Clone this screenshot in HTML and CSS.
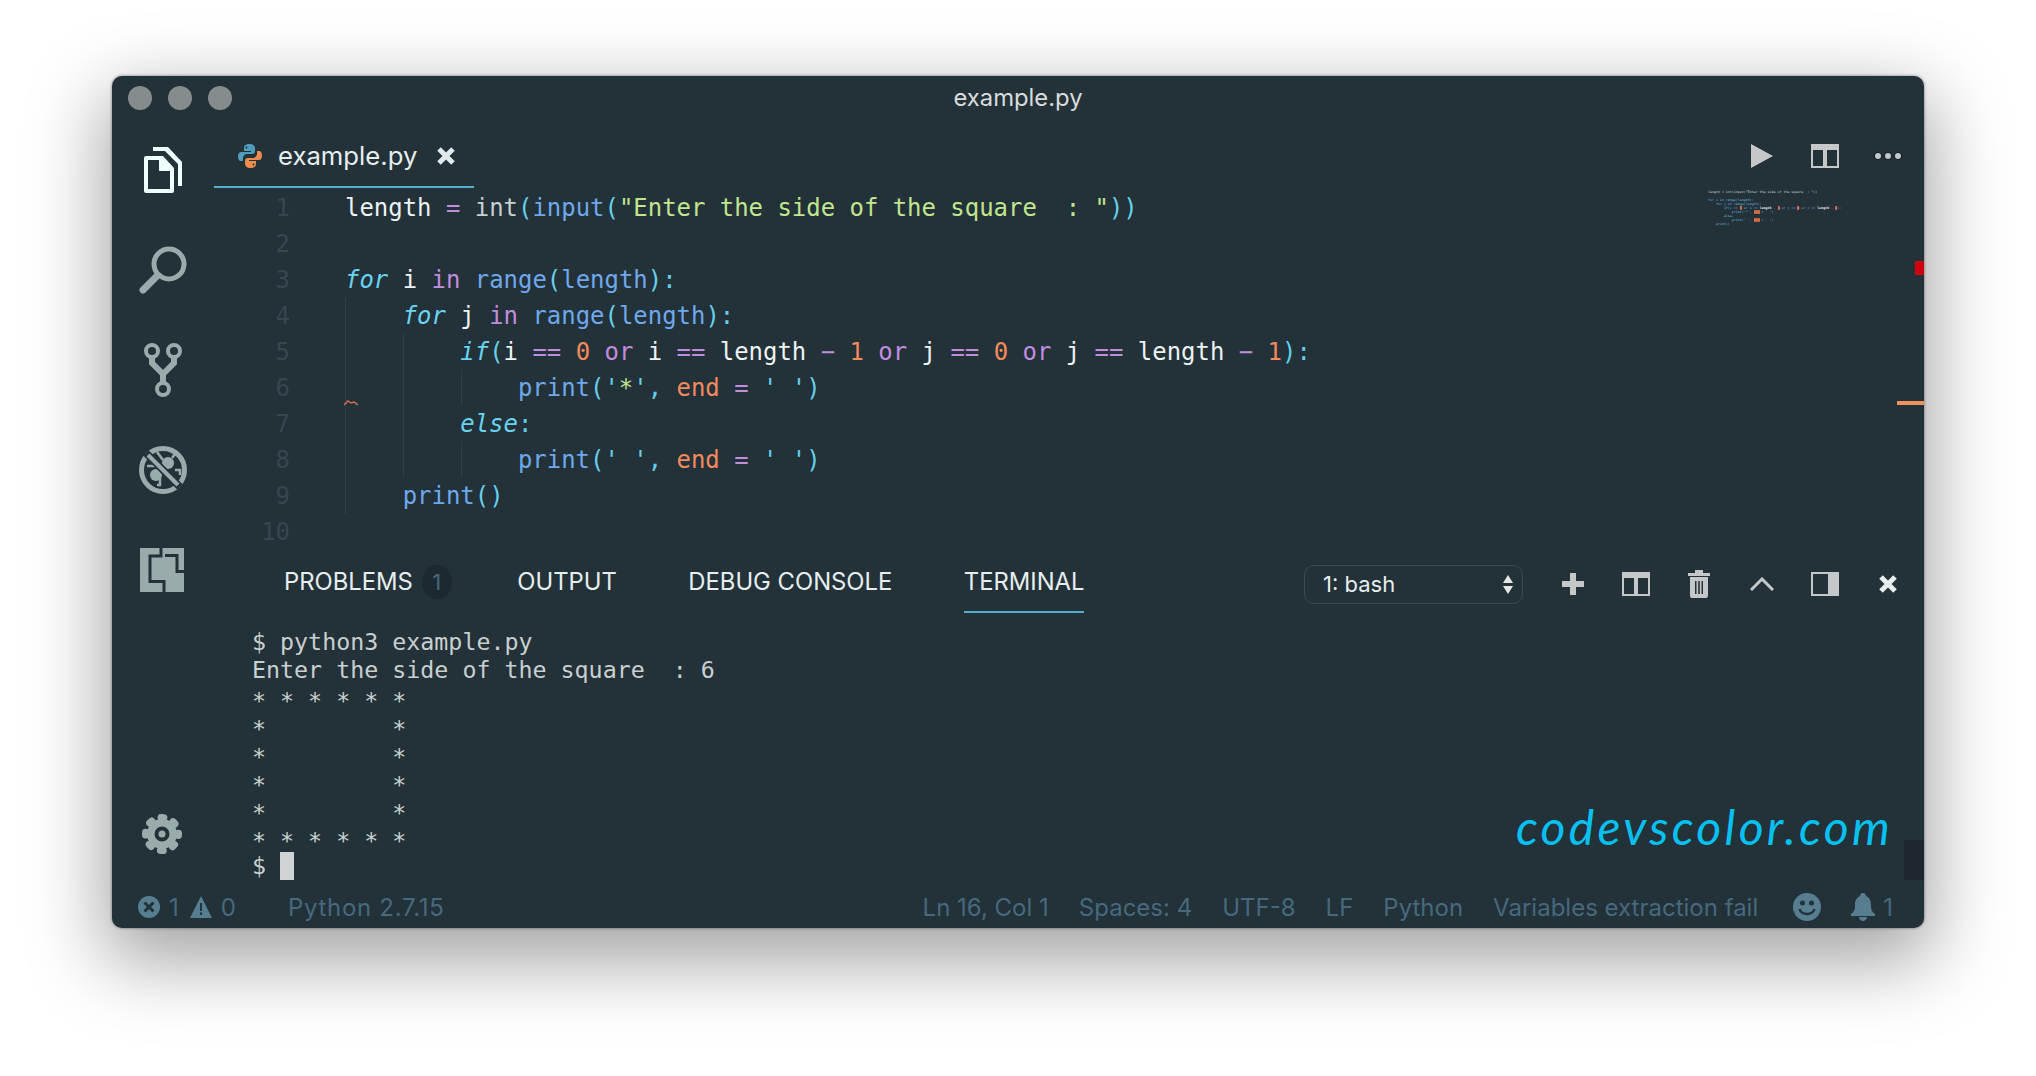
FILE: index.html
```html
<!DOCTYPE html>
<html lang="en">
<head>
<meta charset="utf-8">
<title>example.py</title>
<link rel="stylesheet" href="styles.css">
</head>
<body>
<div class="window">
  <header class="titlebar">
    <div class="lights"><i></i><i></i><i></i></div>
    <div class="title">example.py</div>
  </header>
  <div class="main">
    <nav class="activity">
      <div class="slot">
        <svg width="38" height="46" viewBox="0 0 38 46"><path class="white" d="M9 0h15l14 15v24h-4V17L21 4H9z"/><path class="white" fill-rule="evenodd" d="M2 9h17l11 12v23a2 2 0 0 1-2 2H2a2 2 0 0 1-2-2V11a2 2 0 0 1 2-2zm2 4v29h22V24H15V13z"/></svg>
      </div>
      <div class="slot">
        <svg width="48" height="48" viewBox="0 0 48 48"><circle class="line" cx="30" cy="18" r="15" stroke-width="5"/><path class="line" stroke-width="7" stroke-linecap="round" d="M18 30 4 44"/></svg>
      </div>
      <div class="slot">
        <svg width="38" height="54" viewBox="0 0 38 54"><g class="line"><circle cx="8" cy="8" r="6" stroke-width="4"/><circle cx="30" cy="8" r="6" stroke-width="4"/><circle cx="19" cy="46" r="6" stroke-width="4"/><path stroke-width="6" d="M8 14v6l11 11 11-11v-6M19 31v10"/></g></svg>
      </div>
      <div class="slot">
        <svg width="48" height="48" viewBox="0 0 48 48"><circle class="line" cx="24" cy="24" r="21.500" stroke-width="5"/><circle class="fill" cx="17" cy="29" r="6"/><circle class="fill" cx="29" cy="17" r="6"/><path class="line" stroke-width="2.500" d="M18 6l6 8M33 12l3-4 3 0M36 24h5v5M8 20h8M21 32v7h-3"/><path class="gap" stroke-width="7.500" d="M7 7l34 34"/><path class="line" stroke-width="4" d="M9 9l30 30"/></svg>
      </div>
      <div class="slot slot-ext">
        <svg width="44" height="44" viewBox="0 0 44 44"><rect class="fill" width="44" height="44"/><path class="gap" stroke-width="3" fill="none" d="M21 0v8H10v25.500h14V44M25 7.500h12v16H44M32 24H24"/><rect class="fill" x="12" y="12" width="20" height="20"/></svg>
      </div>
      <div class="slot slot-bottom">
        <svg width="40" height="40" viewBox="0 0 40 40"><circle class="fill" cx="20" cy="20" r="15"/><circle class="line" cx="20" cy="20" r="16.500" stroke-width="7" stroke-linecap="round" stroke-dasharray="3 9.960" stroke-dashoffset="1.500"/><circle class="gap" cx="20" cy="20" r="5.500" fill="none" stroke-width="4"/></svg>
      </div>
    </nav>
    <div class="content">
      <div class="tabbar">
        <div class="tab">
          <svg width="24" height="24" viewBox="0 0 24 24"><path fill="#4f9dba" d="M12 0c-5 0-6 2-6 4v3h7v1H3c-2 0-3 2-3 4.500S1 17 3 17h2v-3c0-2 2-4 4-4h5c2 0 3-1 3-3V4c0-2-2-4-5-4z"/><path fill="#ee8c4f" d="M12 24c5 0 6-2 6-4v-3h-7v-1h10c2 0 3-2 3-4.500S23 7 21 7h-2v3c0 2-2 4-4 4h-5c-2 0-3 1-3 3v3c0 2 2 4 5 4z"/><circle fill="#233139" cx="8.500" cy="3.500" r="1"/><circle fill="#233139" cx="15.500" cy="20.500" r="1"/></svg>
          <span class="tab-name">example.py</span>
          <svg class="tab-close" width="18" height="18" viewBox="0 0 18 18"><path d="M2 2l14 14M16 2 2 16" stroke="#dfeaea" stroke-width="5"/></svg>
        </div>
        <div class="editor-actions">
          <svg class="act-play" width="22" height="24" viewBox="0 0 22 24"><path fill="#c5c7c9" d="M0 0l22 12L0 24z"/></svg>
          <svg class="act-split" width="28" height="24" viewBox="0 0 28 24"><path fill="#c5c7c9" fill-rule="evenodd" d="M0 0h28v24H0zM2 6v16h10V6zM16 6v16h10V6z"/></svg>
          <div class="dots"><i></i><i></i><i></i></div>
        </div>
      </div>
      <div class="editor">
        <div class="gutter">
          <div>1</div><div>2</div><div>3</div><div>4</div><div>5</div><div>6</div><div>7</div><div>8</div><div>9</div><div>10</div>
        </div>
        <div class="code">
          <div>length <b class="op">=</b> <b class="dim">int</b><b class="pn">(</b><b class="fn">input</b><b class="pn">(</b><b class="st">"Enter the side of the square  : "</b><b class="pn">))</b></div>
          <div>&nbsp;</div>
          <div><em class="kw">for</em> i <b class="op">in</b> <b class="fn">range</b><b class="pn">(</b><b class="fn">length</b><b class="pn">):</b></div>
          <div>    <em class="kw">for</em> j <b class="op">in</b> <b class="fn">range</b><b class="pn">(</b><b class="fn">length</b><b class="pn">):</b></div>
          <div>        <em class="kw">if</em><b class="pn">(</b>i <b class="op">==</b> <b class="nu">0</b> <b class="op">or</b> i <b class="op">==</b> length <b class="op">−</b> <b class="nu">1</b> <b class="op">or</b> j <b class="op">==</b> <b class="nu">0</b> <b class="op">or</b> j <b class="op">==</b> length <b class="op">−</b> <b class="nu">1</b><b class="pn">):</b></div>
          <div>            <b class="fn">print</b><b class="pn">(</b><b class="pn">'</b><b class="st">*</b><b class="pn">',</b> <b class="nu">end</b> <b class="op">=</b> <b class="pn">' ')</b></div>
          <div>        <em class="kw">else</em><b class="pn">:</b></div>
          <div>            <b class="fn">print</b><b class="pn">(' ',</b> <b class="nu">end</b> <b class="op">=</b> <b class="pn">' ')</b></div>
          <div>    <b class="fn">print</b><b class="pn">()</b></div>
          <div>&nbsp;</div>
        </div>
        <i class="guide g1"></i><i class="guide g2"></i><i class="guide g3"></i><i class="guide g4"></i>
        <svg class="squiggle" width="14" height="6" viewBox="0 0 14 6"><path d="M0 5 4 1l3 2 3-1 4 3" fill="none" stroke="#d0704f" stroke-width="1.500"/></svg>
        <div class="minimap">
          <div>length = int(input("Enter the side of the square  : "))</div>
          <div>&nbsp;</div>
          <div class="m-blue">for i in range(length):</div>
          <div class="m-blue">    for j in range(length):</div>
          <div class="m-blue">        if(i == <u>0</u> or i == <b>length</b> - <u>1</u> or j == <u>0</u> or j == <b>length</b> - <u>1</u>):</div>
          <div class="m-blue">            print('*', <u>end</u> = ' ')</div>
          <div class="m-blue">        else:</div>
          <div class="m-blue">            print(' ', <u>end</u> = ' ')</div>
          <div class="m-blue">    print()</div>
        </div>
        <i class="mark-red"></i>
        <i class="mark-orange"></i>
      </div>
      <div class="panel">
        <div class="panel-head">
          <div class="panel-tab">PROBLEMS<span class="badge">1</span></div>
          <div class="panel-tab">OUTPUT</div>
          <div class="panel-tab">DEBUG CONSOLE</div>
          <div class="panel-tab active">TERMINAL</div>
          <div class="panel-actions">
            <div class="select">1: bash
              <svg class="sel-arrows" width="10" height="19" viewBox="0 0 10 19"><path fill="#e4e8e8" d="M5 0l5 8H0zM0 11h10l-5 8z"/></svg>
            </div>
            <div class="pa"><svg width="22" height="22" viewBox="0 0 22 22"><path fill="#c5c7c9" d="M8 0h6v8h8v6h-8v8H8v-8H0V8h8z"/></svg></div>
            <div class="pa"><svg width="28" height="24" viewBox="0 0 28 24"><path fill="#c5c7c9" fill-rule="evenodd" d="M0 0h28v24H0zM2 6v16h10V6zM16 6v16h10V6z"/></svg></div>
            <div class="pa"><svg width="22" height="28" viewBox="0 0 22 28"><path fill="#c5c7c9" fill-rule="evenodd" d="M7 0h8v3h7v3H0V3h7zM2 7h18v19a2 2 0 0 1-2 2H4a2 2 0 0 1-2-2zM7 11v13h1.500V11zM10.200 11v13h1.600V11zM13.500 11v13H15V11z"/></svg></div>
            <div class="pa"><svg width="24" height="14" viewBox="0 0 24 14"><path fill="none" stroke="#c5c7c9" stroke-width="3" d="M1 13 12 2l11 11"/></svg></div>
            <div class="pa"><svg width="28" height="24" viewBox="0 0 28 24"><path fill="#c5c7c9" fill-rule="evenodd" d="M0 0h28v24H0zM2 2v20h15V2z"/></svg></div>
            <div class="pa"><svg width="18" height="18" viewBox="0 0 18 18"><path d="M2 2l14 14M16 2 2 16" stroke="#e8eeee" stroke-width="5"/></svg></div>
          </div>
        </div>
        <div class="terminal">
          <div>$ python3 example.py</div>
          <div>Enter the side of the square  : 6</div>
          <div class="stars">* * * * * *</div>
          <div class="stars">*         *</div>
          <div class="stars">*         *</div>
          <div class="stars">*         *</div>
          <div class="stars">*         *</div>
          <div class="stars">* * * * * *</div>
          <div>$ <span class="cursor">&nbsp;</span></div>
        </div>
        <div class="watermark">codevscolor.com</div>
        <i class="thumb"></i>
      </div>
    </div>
  </div>
  <footer class="status">
    <div class="st-item"><svg width="22" height="22" viewBox="0 0 22 22"><circle cx="11" cy="11" r="11" fill="#567e90"/><path d="M6.500 6.500l9 9M15.500 6.500l-9 9" stroke="#233139" stroke-width="3"/></svg><span class="n-a">1</span><svg class="warn" width="22" height="22" viewBox="0 0 22 22"><path fill="#567e90" d="M11 0 22 22H0z"/><path fill="#233139" d="M10 7h2v8h-2zM10 16.500h2v2.500h-2z"/></svg><span class="n-a">0</span></div>
    <div class="st-python">Python 2.7.15</div>
    <div class="st-right">
      <span>Ln 16, Col 1</span>
      <span>Spaces: 4</span>
      <span>UTF-8</span>
      <span>LF</span>
      <span>Python</span>
      <span>Variables extraction fail</span>
      <svg class="smile" width="28" height="28" viewBox="0 0 28 28"><circle cx="14" cy="14" r="14" fill="#567e90"/><circle cx="9.500" cy="10" r="2.500" fill="#233139"/><circle cx="18.500" cy="10" r="2.500" fill="#233139"/><path d="M6.500 16c2 6.500 13 6.500 15 0" fill="none" stroke="#233139" stroke-width="2.500"/></svg>
      <span class="bell"><svg width="24" height="28" viewBox="0 0 24 28"><path fill="#567e90" d="M12 0c2 0 3 1 3 3 4 2 5 5 5 9 0 5 1 7 4 9v2H0v-2c3-2 4-4 4-9 0-4 1-7 5-9 0-2 1-3 3-3zM8 24h8c0 2-2 4-4 4s-4-2-4-4z"/></svg><span>1</span></span>
    </div>
  </footer>
</div>
</body>
</html>
```
FILE: styles.css
```css
html, body { margin: 0; height: 1076px; background: #fff; overflow: hidden; }
body { padding: 76px 112px 0; box-sizing: border-box; }
b { font-weight: normal; }
.window {
  width: 1812px; height: 852px; background: #233139; border-radius: 10px;
  display: flex; flex-direction: column; color: #dfe8e8;
  box-shadow: 0 26px 76px 8px rgba(0,0,0,.36), 0 0 3px rgba(0,0,0,.5);
  font-family: Inter, "Liberation Sans", sans-serif;
}
.titlebar { height: 44px; display: flex; align-items: center; position: relative; justify-content: center; flex: none; }
.lights { position: absolute; left: 16px; top: 10px; display: flex; gap: 16px; }
.lights i { width: 24px; height: 24px; border-radius: 50%; background: #868c8d; }
.title { font-size: 23.800px; color: #d8dcdc; padding-bottom: 2px; }
.main { flex: 1; display: flex; min-height: 0; }
.activity { width: 102px; flex: none; display: flex; flex-direction: column; align-items: center; padding-bottom: 4px; box-sizing: border-box; }
.slot { height: 100px; display: flex; align-items: center; justify-content: center; flex: none; }
.slot-ext { padding-right: 2px; }
.slot-bottom { margin-top: auto; padding-right: 2px; }
.white { fill: #effefe; }
.line { fill: none; stroke: #9aabac; }
.fill { fill: #9aabac; }
.gap { stroke: #233139; }
.content { flex: 1; display: flex; flex-direction: column; min-width: 0; }
.tabbar { height: 68px; display: flex; justify-content: space-between; flex: none; }
.tab { width: 260px; box-sizing: border-box; border-bottom: 2px solid #56aecb; display: flex; align-items: center; padding: 5px 0 0 24px; }
.tab-name { font-size: 25.700px; margin-left: 16px; color: #e6eeee; }
.tab-close { margin-left: 20px; }
.editor-actions { display: flex; align-items: center; padding: 4px 23px 0 0; }
.act-split { margin-left: 38px; }
.dots { display: flex; gap: 4px; margin-left: 36px; }
.dots i { width: 6px; height: 6px; border-radius: 50%; background: #c5c7c9; box-shadow: 0 0 0 1px #18242a; }
.editor { height: 366px; position: relative; display: flex; flex: none; padding-top: 2px; box-sizing: border-box; font: 23.950px/36px "DejaVu Sans Mono", monospace; }
.gutter { width: 76px; text-align: right; color: #36474f; flex: none; }
.code { margin-left: 55px; color: #eef3f3; }
.code div { white-space: pre; }
.kw { color: #6ad3f2; font-style: italic; }
.op { color: #c18ddf; }
.fn { color: #6fa9ec; }
.pn { color: #65d0ea; }
.dim { color: #c7d0d0; }
.st { color: #c2e58e; }
.nu { color: #f58a5c; }
.guide { position: absolute; width: 0; border-left: 1px dotted #3d4d55; }
.g1 { left: 131px; top: 110px; height: 215px; }
.g2 { left: 189px; top: 146px; height: 143px; }
.g3 { left: 247px; top: 182px; height: 35px; }
.g4 { left: 247px; top: 254px; height: 35px; }
.squiggle { position: absolute; left: 130px; top: 212px; }
.minimap { position: absolute; left: 1494px; top: 2px; font-size: 3.300px; line-height: 4px; color: #d5dcdc; }
.minimap div { white-space: pre; }
.m-blue { color: #72bde0; }
.m-blue b { color: #eef3f3; font-weight: bold; }
.m-blue u { color: #f58a5c; background: #b8633f; text-decoration: none; }
.mark-red { position: absolute; right: 0; top: 73px; width: 9px; height: 14px; background: #d0000e; }
.mark-orange { position: absolute; right: 0; top: 213px; width: 27px; height: 4px; background: #f0905c; }
.panel { flex: 1; position: relative; display: flex; flex-direction: column; min-height: 0; }
.panel-head { height: 60px; display: flex; padding-left: 70px; gap: 71.500px; flex: none; font-size: 23.800px; }
.panel-tab { height: 59px; box-sizing: border-box; padding-top: 14px; line-height: 28px; color: #e6eeee; display: flex; }
.panel-tab.active { border-bottom: 2px solid #56aecb; }
.badge { width: 30px; height: 34px; border-radius: 50%; background: #1d2931; color: #46697e; text-align: center; font-size: 22px; line-height: 34px; margin: -3px -6px 0 9px; }
.panel-actions { margin-left: auto; display: flex; align-items: center; height: 60px; padding-right: 5px; }
.select { width: 219px; height: 39px; box-sizing: border-box; border: 1px solid #3a4a52; border-radius: 10px; padding-left: 18px; display: flex; align-items: center; position: relative; margin-right: 18px; color: #e6eeee; font-size: 22px; }
.sel-arrows { position: absolute; right: 9px; top: 9px; }
.pa { width: 63px; display: flex; justify-content: center; align-items: center; height: 40px; }
.terminal { padding: 14px 0 0 38px; font: 23.300px/28px "DejaVu Sans Mono", monospace; color: #c8cfcf; }
.terminal div { white-space: pre; height: 28px; }
.terminal .stars { box-sizing: border-box; padding-top: 3px; }
.cursor { display: inline-block; width: 14px; height: 28px; background: #d0d4d4; vertical-align: top; }
.watermark { position: absolute; right: 31px; top: 245px; font: italic 48px/56px Lato, cursive; color: #08c0f0; letter-spacing: 3.300px; }
.thumb { position: absolute; right: 0; top: 286px; width: 20px; height: 40px; background: #1c282e; }
.status { height: 40px; flex: none; display: flex; align-items: center; padding: 0 31px 2px 26px; box-sizing: border-box; font-size: 24px; color: #46697e; }
.st-item { display: flex; align-items: center; }
.n-a { margin-left: 9px; }
.warn { margin-left: 11px; }
.st-python { margin-left: 52px; letter-spacing: .7px; }
.st-right { margin-left: auto; display: flex; align-items: center; gap: 30px; }
.smile { margin-left: 5px; }
.bell { display: flex; align-items: center; gap: 8px; }
```
